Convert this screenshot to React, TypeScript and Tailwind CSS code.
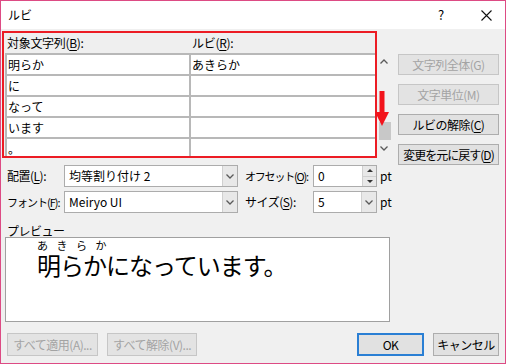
import React from 'react';

const FONT = "font-['Noto_Sans_CJK_JP','Noto_Sans',sans-serif]";

const Chevron: React.FC<{ up?: boolean; className?: string }> = ({ up, className }) => (
    <svg className={className} width="8" height="5" viewBox="0 0 8 5" fill="none" stroke="#5a5a5a" strokeWidth={1.3}>
        {up ? <path d="M0.5 4.5L4 1L7.5 4.5" /> : <path d="M0.5 0.5L4 4L7.5 0.5" />}
    </svg>
);

const Btn: React.FC<{ label: React.ReactNode; w: string; disabled?: boolean; primary?: boolean; h?: string }> = ({
    label,
    w,
    disabled,
    primary,
    h = 'h-[21px]',
}) => (
    <div
        className={`${w} ${h} flex items-center justify-center whitespace-nowrap text-[12px] tracking-[-0.5px] leading-none ${
            disabled
                ? 'border border-[#c6c6c6] bg-[#e3e3e3] text-[#a3a3a3]'
                : primary
                  ? 'border-2 border-[#2a7fd4] bg-[#e1e1e1] text-black'
                  : 'border border-[#adadad] bg-[#e1e1e1] text-black'
        }`}
    >
        {label}
    </div>
);

const U: React.FC<{ children: React.ReactNode }> = ({ children }) => <span className="underline underline-offset-2">{children}</span>;

const Combo: React.FC<{ value: string; w: string }> = ({ value, w }) => (
    <div className={`${w} h-[22px] flex border border-[#acacac] bg-white`}>
        <div className="flex-1 pl-[4px] flex items-center whitespace-nowrap text-[12px] text-black">{value}</div>
        <div className="w-[15px] flex items-center justify-center bg-[#e8e8e8] border-l border-[#d0d0d0]">
            <Chevron />
        </div>
    </div>
);

export default function App() {
    const rows = [
        ['明らか', 'あきらか'],
        ['に', ''],
        ['なって', ''],
        ['います', ''],
        ['。', ''],
    ];

    return (
        <div className={`${FONT} w-[506px] h-[364px] border border-[#dd4b84] bg-[#f0f0f0] flex flex-col overflow-hidden`}>
            {/* title bar */}
            <div className="h-[28px] shrink-0 bg-white flex items-center pl-[7px] text-[12px] text-black">
                <span>ルビ</span>
                <span className="ml-auto w-[12px] text-center text-[13px]">?</span>
                <span className="ml-[33px] mr-[13px] w-[12px] flex items-center justify-center">
                    <svg width="11" height="11" viewBox="0 0 11 11" stroke="#111" strokeWidth={1.1}>
                        <path d="M0.5 0.5L10.5 10.5M10.5 0.5L0.5 10.5" />
                    </svg>
                </span>
            </div>

            {/* top area */}
            <div className="flex pt-[2px] pl-[1px]">
                <div className="w-[375px] h-[127px] border-2 border-[#ec1c24] flex flex-col">
                    <div className="h-[20px] shrink-0 flex items-center whitespace-nowrap text-[12px] tracking-[-0.3px] text-black bg-[#efefef]">
                        <span className="pl-[3px] w-[188px]">
                            対象文字列(<U>B</U>):
                        </span>
                        <span>
                            ルビ(<U>R</U>):
                        </span>
                    </div>
                    <div className="flex-1 overflow-hidden ml-[1px] border-l-2 border-[#b8b8b8] bg-white">
                        {rows.map(([a, b], i) => (
                            <div key={i} className="h-[21px] flex border-t-2 border-[#b8b8b8] text-[12px] text-black">
                                <div className="w-[184px] border-r-2 border-[#b8b8b8] pl-[1px] flex items-center">{a}</div>
                                <div className="flex-1 pl-[1px] flex items-center">{b}</div>
                            </div>
                        ))}
                    </div>
                </div>

                {/* scroll column */}
                <div className="relative w-[18px] flex flex-col items-start pl-[2px]">
                    <Chevron up className="mt-[28px] ml-[1px]" />
                    <div className="mt-[58px] w-[12px] h-[18px] bg-[#c8c8c8]" />
                    <Chevron className="mt-[6px] ml-[1px]" />
                    <svg className="absolute left-[-2px] top-[60px]" width="14" height="36" viewBox="0 0 14 36">
                        <rect x="4.5" y="0" width="5" height="22" fill="#f2141c" />
                        <path d="M0 21H14L7 35Z" fill="#f2141c" />
                    </svg>
                </div>

                {/* right buttons */}
                <div className="ml-[3px] mt-[23px] flex flex-col gap-[9px]">
                    <Btn w="w-[101px]" disabled label="文字列全体(G)" />
                    <Btn w="w-[101px]" disabled label="文字単位(M)" />
                    <Btn
                        w="w-[101px]"
                        label={
                            <span>
                                ルビの解除(<U>C</U>)
                            </span>
                        }
                    />
                    <Btn
                        w="w-[101px]"
                        label={
                            <span className="tracking-[-1px]">
                                変更を元に戻す(<U>D</U>)
                            </span>
                        }
                    />
                </div>
            </div>

            {/* row 1 */}
            <div className="flex items-center pl-[6px] h-[22px] text-[12px] text-black whitespace-nowrap">
                <span className="w-[57px] tracking-[-0.5px]">
                    配置(<U>L</U>):
                </span>
                <Combo w="w-[174px]" value="均等割り付け 2" />
                <span className="ml-[7px] w-[68px] text-[11px] tracking-[-1.2px]">
                    オフセット(<U>O</U>):
                </span>
                <div className="w-[64px] h-[22px] flex border border-[#acacac] bg-white">
                    <div className="flex-1 pl-[4px] flex items-center">0</div>
                    <div className="w-[14px] flex flex-col border-l border-[#d0d0d0]">
                        <div className="flex-1 flex items-center justify-center bg-[#e8e8e8] border-b border-[#d0d0d0]">
                            <svg width="6" height="3" viewBox="0 0 6 3">
                                <path d="M0 3H6L3 0Z" fill="#333" />
                            </svg>
                        </div>
                        <div className="flex-1 flex items-center justify-center bg-[#e8e8e8]">
                            <svg width="6" height="3" viewBox="0 0 6 3">
                                <path d="M0 0H6L3 3Z" fill="#333" />
                            </svg>
                        </div>
                    </div>
                </div>
                <span className="ml-[3px]">pt</span>
            </div>

            {/* row 2 */}
            <div className="flex items-center pl-[6px] mt-[4px] h-[22px] text-[12px] text-black whitespace-nowrap">
                <span className="w-[57px] text-[11px] tracking-[-1px]">
                    フォント(<U>F</U>):
                </span>
                <Combo w="w-[174px]" value="Meiryo UI" />
                <span className="ml-[7px] w-[68px] tracking-[-0.5px]">
                    サイズ(<U>S</U>):
                </span>
                <Combo w="w-[64px]" value="5" />
                <span className="ml-[3px]">pt</span>
            </div>

            {/* preview */}
            <div className="mt-[11px] pl-[6px] h-[13px] leading-[13px] text-[12px] tracking-[-0.5px] text-black">プレビュー</div>
            <div className="ml-[4px] w-[385px] h-[85px] shrink-0 border border-[#a0a0a0] bg-white pl-[31px] pt-[2px] flex flex-col">
                <div className="h-[11px] leading-[11px] text-[11px] tracking-[8.5px] text-black whitespace-nowrap">あきらか</div>
                <div className="leading-[28px] text-[24px] tracking-[-1px] text-black whitespace-nowrap">明らかになっています。</div>
            </div>

            {/* bottom buttons */}
            <div className="mt-[11px] flex pl-[6px] pr-[6px]">
                <Btn w="w-[91px]" h="h-[23px]" disabled label="すべて適用(A)..." />
                <div className="ml-[9px]">
                    <Btn w="w-[90px]" h="h-[23px]" disabled label="すべて解除(V)..." />
                </div>
                <div className="ml-auto">
                    <Btn w="w-[67px]" h="h-[23px]" primary label="OK" />
                </div>
                <div className="ml-[9px]">
                    <Btn w="w-[66px]" h="h-[23px]" label="キャンセル" />
                </div>
            </div>
        </div>
    );
}
